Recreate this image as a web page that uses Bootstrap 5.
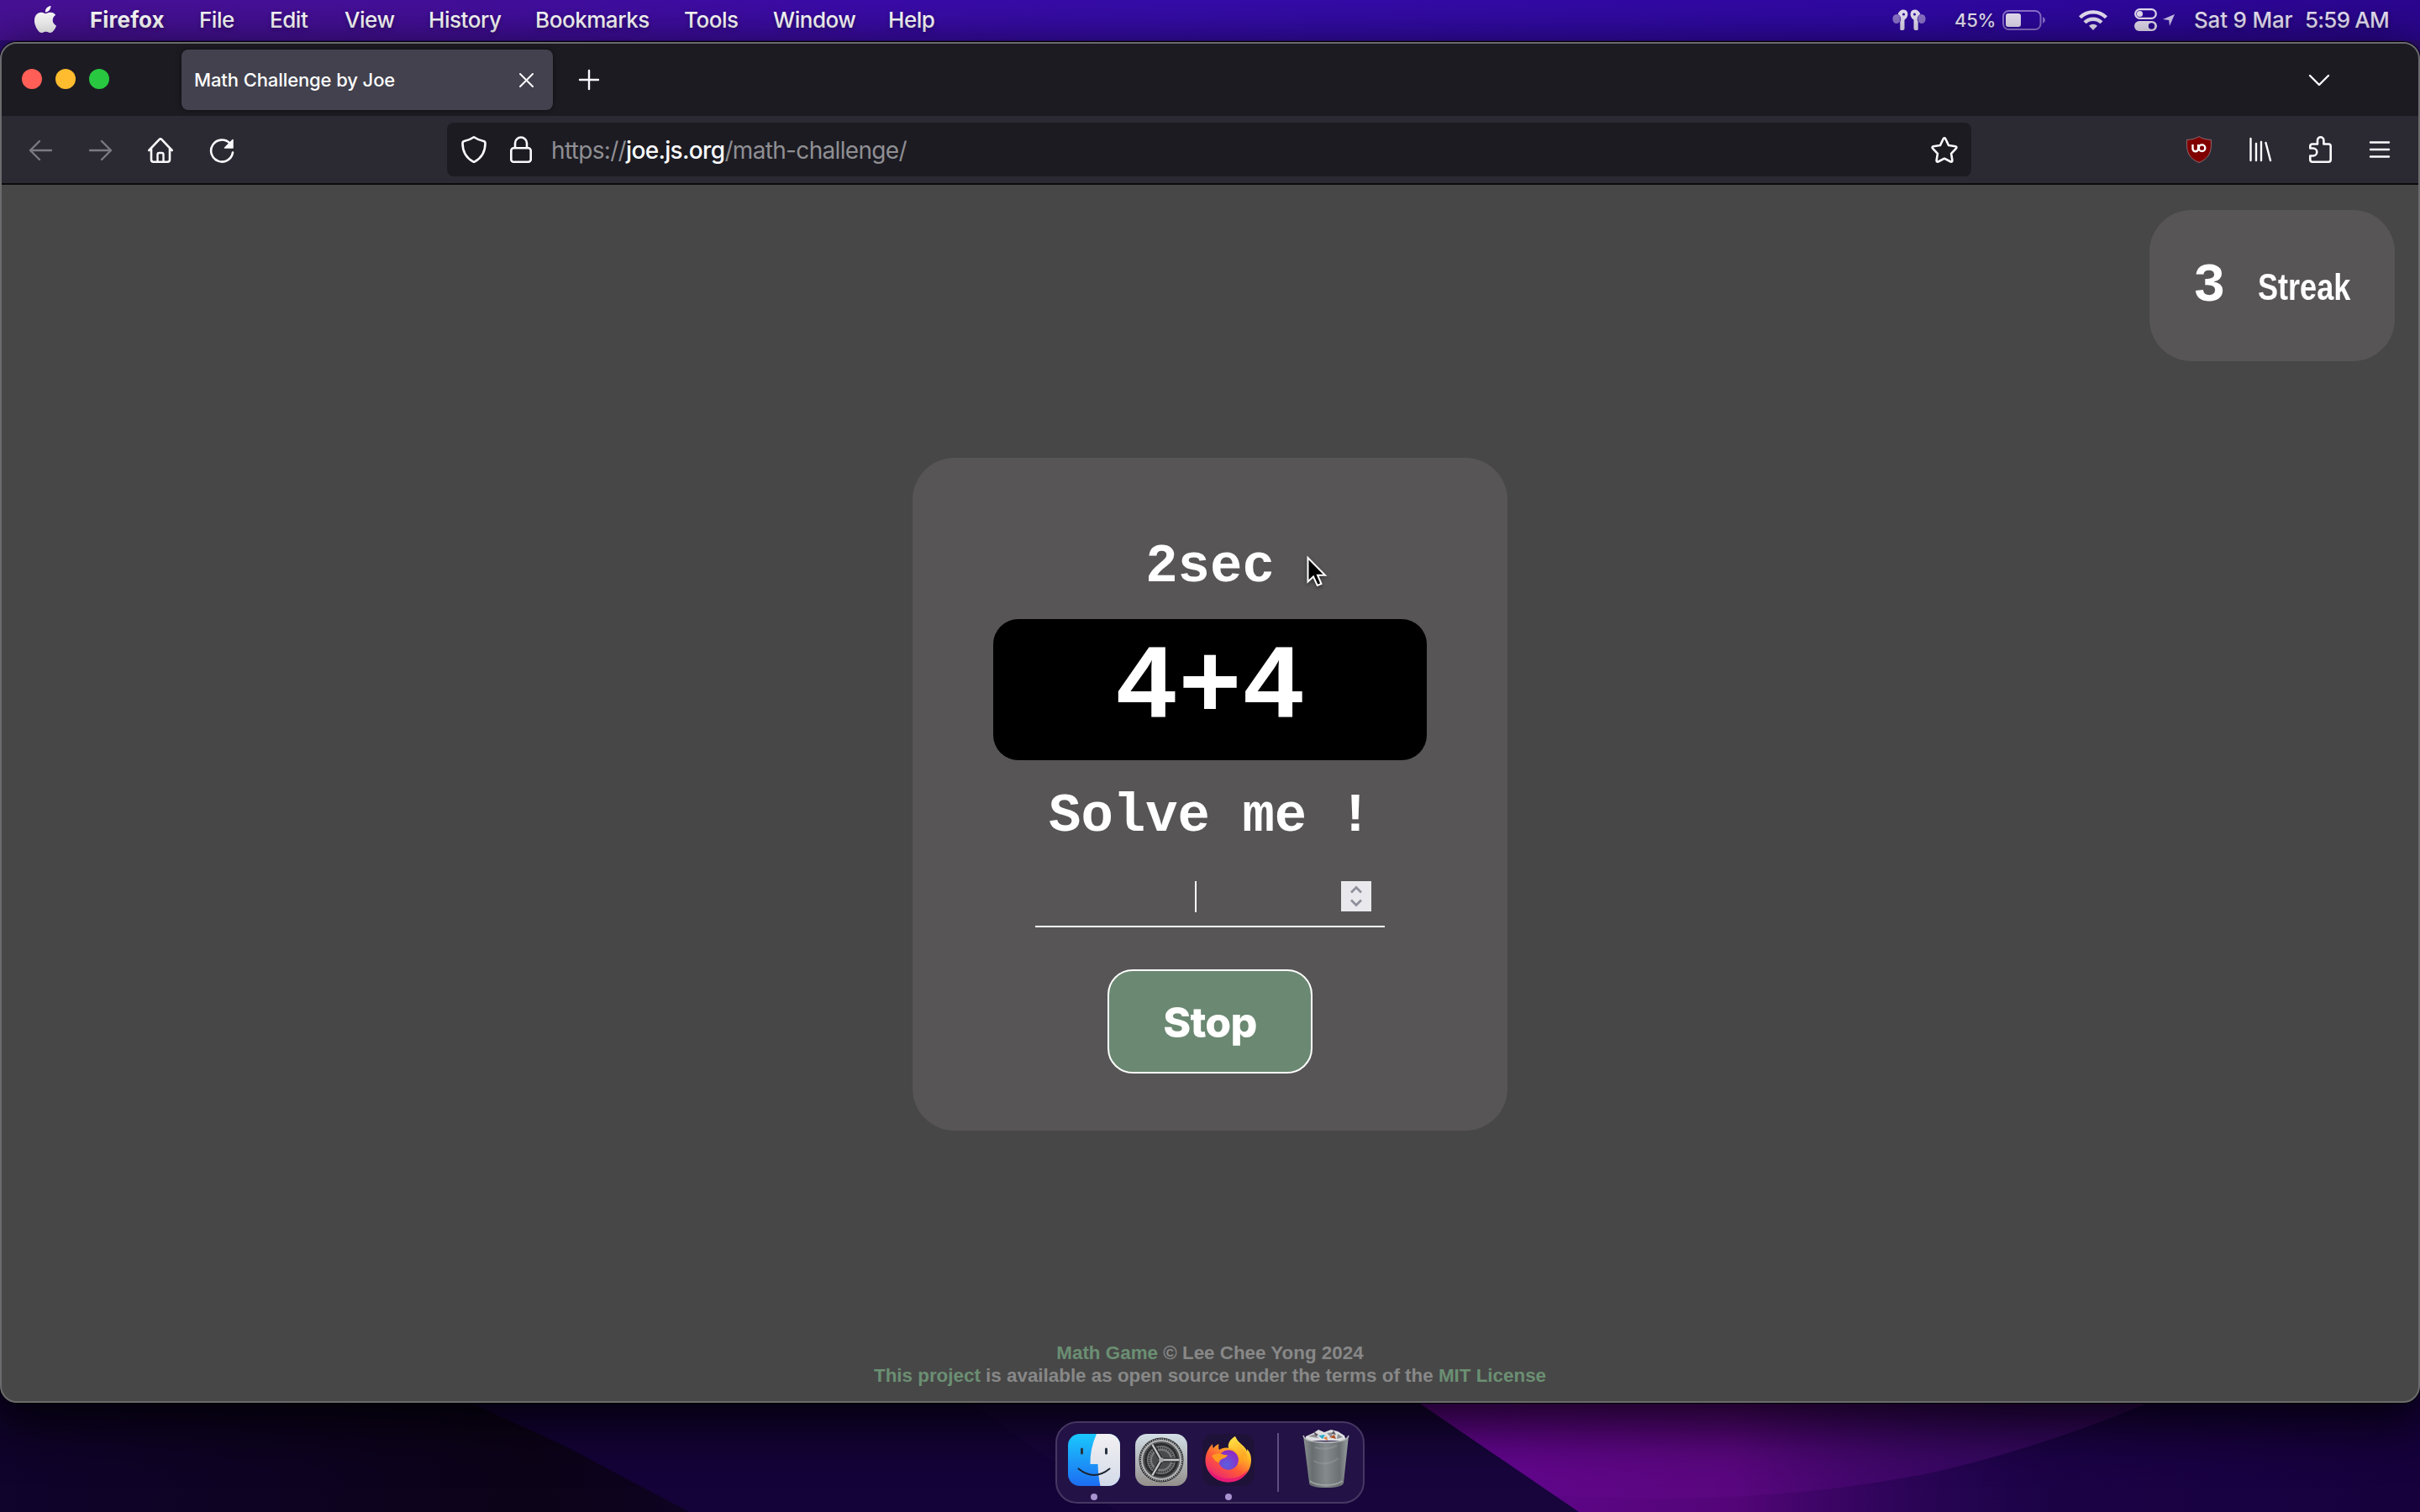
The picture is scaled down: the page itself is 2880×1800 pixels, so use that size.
<!DOCTYPE html>
<html lang="en">
<head>
<meta charset="utf-8">
<title>Math Challenge by Joe</title>
<link rel="stylesheet" href="https://cdn.jsdelivr.net/npm/bootstrap@5.3.0/dist/css/bootstrap.min.css">
<style>
  body { width: 2880px; height: 1800px; overflow: hidden; font-family: Inter, "Noto Sans", sans-serif; background: #0b0220; color: #fff; }
  .wallpaper { inset: 0; width: 2880px; height: 1800px; z-index: -1; }
  svg { display: block; flex: none; overflow: visible; }

  /* system menu bar */
  .menubar { height: 48px; margin-bottom: 2px; padding-bottom: 1px; font-size: 26px; line-height: 46px; white-space: nowrap;
    background: linear-gradient(90deg, #471195 0, #440f99 500px, #3b0ba8 1000px, #350ca9 1400px, #2f08a2 2300px, #2b068f 2880px); text-shadow: 0 2px 5px rgba(0,0,0,.35); }
  .apple-mark { margin-left: 38px; margin-top: -2px; }
  .menu-titles { display: grid; grid-template-columns: 130px 84px 89px 100px 127px 177px 106px 137px 80px; margin-left: 37px; letter-spacing: -.45px; font-weight: 500; }
  .menu-titles span:first-child { font-weight: 700; letter-spacing: .1px; }
  .tray { color: #e9e2f6; margin-right: 37px; }
  .tray-pct { font-size: 22px; width: 57px; margin-left: 34px; letter-spacing: -.3px; padding-top: 1px; font-weight: 500; }
  .wifi { margin-left: 39px; }
  .controls { margin-left: 32px; }
  .location { margin-left: 7px; }
  .tray-date { width: 132px; margin-left: 23px; font-weight: 500; letter-spacing: -.2px; }
  .tray-time { width: 100px; font-weight: 500; letter-spacing: -.8px; }

  /* browser window */
  .window { height: 1620px; border: 2px solid #6b6b6d; border-radius: 20px; overflow: hidden; background: #474747; }
  .window-shadow { border-radius: 20px; box-shadow: 0 0 0 1px #000, 0 18px 60px 10px rgba(0,0,0,.75); height: 1620px; }
  .tabstrip { height: 86px; background: #1c1b22; }
  .lights { margin-left: 24px; gap: 16px; margin-top: -2px; }
  .lights i { width: 24px; height: 24px; border-radius: 50%; }
  .light-close { background: #ff5f57; } .light-min { background: #febc2e; } .light-max { background: #28c840; }
  .tab-active { width: 442px; height: 72px; margin-left: 86px; margin-top: -1px; border-radius: 8px; background: #42414d; box-shadow: 0 0 6px rgba(0,0,0,.5); font-size: 22px; padding: 1px 23px 0 15px; font-weight: 500; letter-spacing: -.1px; }
  .tab-new { margin-left: 31px; }
  .tab-list { margin-right: 106px; }
  .toolbar { height: 82px; background: #2b2a33; border-bottom: 2px solid #0c0c0d; }
  .nav-icons { margin: 2px 0 0 32px; gap: 43px; }
  .urlbar { width: 1814px; height: 64px; border-radius: 8px; background: #1c1b22; margin-left: 253px; font-size: 28px; color: #8f8f93; padding: 0 16px 0 17px; }
  .lock { margin-left: 28px; }
  .url { margin-left: 23px; letter-spacing: -.67px; padding-top: 1px; }
  .url b { color: #fbfbfe; font-weight: 500; }
  .tool-icons { margin-right: 34px; gap: 45px; }

  /* game page */
  .page { height: 1448px; }
  .streak { width: 292px; height: 180px; margin: 30px 28px 0 0; border-radius: 50px; background: #575556; padding: 56px 0 0 52px; }
  .streak-n { font: 700 64px/70px "Liberation Mono", monospace; width: 38px; }
  .streak-t { font: 700 44px/72px "Liberation Sans", sans-serif; transform: scaleX(.82); transform-origin: 0 50%; margin-left: 39px; }
  .game { width: 708px; height: 801px; margin-top: 115px; border-radius: 50px; background: #575556; font-family: "Liberation Mono", monospace; font-weight: 700; padding-top: 94px; }
  .game-line { font-size: 64px; line-height: 72px; white-space: pre; }
  .question { width: 516px; height: 168px; margin-top: 26px; border-radius: 30px; background: #000; font-size: 126px; line-height: 168px; }
  .ask { margin-top: 31px; }
  .answer { width: 416px; height: 74px; margin-top: 22px; border-bottom: 2px solid #fff; padding: 19px 16px 0 190px; }
  .caret { width: 2px; height: 37px; background: #fff; }
  .stop { width: 244px; height: 124px; margin-top: 50px; border: 2px solid #fff; border-radius: 30px; background: #6b8872; color: #fff; font: 800 50px/1 Inter, sans-serif; letter-spacing: -.8px; padding: 2px 0 0; }
  .credits { color: #888; font: 700 22.4px/27px "Liberation Sans", sans-serif; margin-bottom: 17px; }
  .credits a { color: #6b8f73; text-decoration: none; }
  .pointer { left: 1555px; top: 662px; }

  /* dock */
  .dock { width: 368px; height: 98px; margin-top: 22px; border: 2px solid #453762; border-radius: 26px; background: #231246; padding: 13px 0 0 13px; }
  .dock-app { width: 80px; }
  .dock-dot { width: 8px; height: 8px; border-radius: 50%; background: #a892cf; margin: 9px 0 0 27px; }
  .dock-sep { width: 2px; height: 70px; background: #5f4d84; margin: -1px 0 0 9px; }
  .trash { margin: -6px 0 0 29px; }
</style>
<script src="https://cdn.jsdelivr.net/npm/bootstrap@5.3.0/dist/js/bootstrap.bundle.min.js"></script>
</head>
<body class="position-relative d-flex flex-column">
<svg class="wallpaper position-absolute" viewBox="0 0 2880 1800">
  <defs>
    <linearGradient id="wp" x1="0" x2="1" y1="0" y2="0"><stop offset="0" stop-color="#10032c"/><stop offset=".22" stop-color="#0c0318"/><stop offset=".5" stop-color="#150340"/><stop offset=".7" stop-color="#210450"/><stop offset="1" stop-color="#16013c"/></linearGradient>
    <linearGradient id="pu" x1="1690" x2="2440" y1="0" y2="0" gradientUnits="userSpaceOnUse"><stop offset="0" stop-color="#620590"/><stop offset=".5" stop-color="#540578"/><stop offset="1" stop-color="#2b0659" stop-opacity="0"/></linearGradient>
    <linearGradient id="ar" x1="1690" x2="2570" y1="0" y2="0" gradientUnits="userSpaceOnUse"><stop offset="0" stop-color="#7a0aa0" stop-opacity=".1"/><stop offset="1" stop-color="#5a1080" stop-opacity=".4"/></linearGradient>
  </defs>
  <rect width="2880" height="1800" fill="url(#wp)"/>
  <rect width="2880" height="80" fill="#2f0c78"/>
  <path d="M540 1660C600 1690 640 1705 683 1727L820 1800H1900V1660Z" fill="#140338"/>
  <path d="M1140 1660L1260 1745 1330 1800H1900V1660Z" fill="#17053c"/>
  <path d="M1674 1660L1879 1800H2500V1660Z" fill="url(#pu)"/>
  <path d="M1674 1660L1850 1780Q2080 1795 2290 1755Q2430 1725 2580 1660Z" fill="url(#ar)"/>
</svg>

<nav class="menubar d-flex align-items-center">
  <svg class="apple-mark" width="32" height="32" viewBox="0 0 16 16" fill="#fff"><path d="M11.182.008C11.148-.03 9.923.023 8.857 1.18c-1.066 1.156-.902 2.482-.878 2.516s1.52.087 2.475-1.258.762-2.391.728-2.43m3.314 11.733c-.048-.096-2.325-1.234-2.113-3.422s1.675-2.789 1.698-2.854-.597-.79-1.254-1.157a3.7 3.7 0 0 0-1.563-.434c-.108-.003-.483-.095-1.254.116-.508.139-1.653.589-1.968.607-.316.018-1.256-.522-2.267-.665-.647-.125-1.333.131-1.824.328-.49.196-1.422.754-2.074 2.237-.652 1.482-.311 3.83-.067 4.56s.625 1.924 1.273 2.796c.576.984 1.34 1.667 1.659 1.899s1.219.386 1.843.067c.502-.308 1.408-.485 1.766-.472.357.013 1.061.154 1.782.539.571.197 1.111.115 1.652-.105.541-.221 1.324-1.059 2.238-2.758q.52-1.185.473-1.282"/></svg>
  <div class="menu-titles"><span>Firefox</span><span>File</span><span>Edit</span><span>View</span><span>History</span><span>Bookmarks</span><span>Tools</span><span>Window</span><span>Help</span></div>
  <div class="tray d-flex align-items-center ms-auto">
    <!-- earbuds -->
    <svg width="40" height="26" viewBox="0 0 40 26" fill="#e9e2f6"><g id="bud"><ellipse cx="5" cy="11.500" rx="4.600" ry="5.500" opacity=".5"/><path d="M6.500 6C8 1 13-1 16.500 1.500c3 2.500 2.500 8.500-2 11V23a2 2 0 0 1-2 2h-2.200a1 1 0 0 1-1-1V15c2-3 .5-8-2.800-9z"/><circle cx="13.500" cy="6" r="1.500" fill="#2f08a2"/></g><use href="#bud" transform="matrix(-1 0 0 1 40 0)"/></svg>
    <span class="tray-pct">45%</span>
    <svg width="52" height="24" viewBox="0 0 52 24"><rect x="1" y="1" width="44.500" height="22" rx="6.500" fill="none" stroke="#8b70cf" stroke-width="2"/><rect x="4" y="4" width="18" height="16" rx="3" fill="#e9e2f6"/><path d="M48 8q3 1.500 3 4t-3 4z" fill="#8b70cf"/></svg>
    <svg class="wifi" width="34" height="26" viewBox="0 0 34 26" fill="none" stroke="#e9e2f6" stroke-width="4.400"><path d="M1.500 9.800a22 22 0 0 1 31 0M7 15.800a14.300 14.300 0 0 1 20 0"/><path d="M17 25l-5-5.200a7.200 7.200 0 0 1 10 0z" fill="#e9e2f6" stroke="none"/></svg>
    <svg class="controls" width="27" height="27" viewBox="0 0 27 27"><rect x="1.200" y="1.200" width="24.600" height="10.600" rx="5.300" fill="none" stroke="#e9e2f6" stroke-width="2.200"/><circle cx="6.500" cy="6.500" r="3.600" fill="#e9e2f6"/><rect y="15" width="27" height="12" rx="6" fill="#e9e2f6"/><circle cx="20.500" cy="21" r="3.700" fill="#2d0796"/></svg>
    <svg class="location" width="14" height="14" viewBox="0 0 14 14" fill="#d2c8ee"><path d="M14 0L8 14 7.200 7 0 6z"/></svg>
    <span class="tray-date">Sat 9 Mar</span><span class="tray-time">5:59 AM</span>
  </div>
</nav>

<div class="window-shadow"><main class="window">
  <div class="tabstrip d-flex align-items-center">
    <div class="lights d-flex"><i class="light-close"></i><i class="light-min"></i><i class="light-max"></i></div>
    <div class="tab-active d-flex align-items-center justify-content-between"><span>Math Challenge by Joe</span>
      <svg width="17" height="17" viewBox="0 0 17 17" stroke="#fbfbfe" stroke-width="2" stroke-linecap="round"><path d="M1 1l15 15M16 1L1 16"/></svg></div>
    <svg class="tab-new" width="24" height="24" viewBox="0 0 24 24" stroke="#fbfbfe" stroke-width="2.400" stroke-linecap="round"><path d="M12 1v22M1 12h22"/></svg>
    <svg class="tab-list ms-auto" width="24" height="13" viewBox="0 0 24 13" fill="none" stroke="#fbfbfe" stroke-width="2.400" stroke-linecap="round" stroke-linejoin="round"><path d="M1 1l11 11L23 1"/></svg>
  </div>

  <div class="toolbar d-flex align-items-center">
    <div class="nav-icons d-flex align-items-center">
      <svg width="28" height="26" viewBox="0 0 28 26" fill="none" stroke="#7b7a82" stroke-width="2.400" stroke-linecap="round" stroke-linejoin="round"><path d="M27 13H2M13 2L2 13l11 11"/></svg>
      <svg width="28" height="26" viewBox="0 0 28 26" fill="none" stroke="#7b7a82" stroke-width="2.400" stroke-linecap="round" stroke-linejoin="round"><path d="M2 13h25M16 2l11 11-11 11"/></svg>
      <svg width="30" height="30" viewBox="0 0 30 30" fill="none" stroke="#fbfbfe" stroke-width="2.600" stroke-linecap="round" stroke-linejoin="round"><path d="M1.300 15L13.500 2.200q1.500-1.500 3 0L28.700 15M4 13v13q0 2.700 2.700 2.700h16.600q2.700 0 2.700-2.700V13"/><path d="M11.500 28.500V20q0-2 2-2h3q2 0 2 2v8.500" stroke-width="2.400"/></svg>
      <svg width="30" height="30" viewBox="0 0 30 30" fill="none" stroke="#fbfbfe" stroke-width="2.600" stroke-linecap="round"><path d="M28 17.500A13 13 0 1 1 24.500 6.500"/><path d="M28 2.500v9.500h-9.500z" fill="#fbfbfe" stroke-width="1.500" stroke-linejoin="round"/></svg>
    </div>
    <div class="urlbar d-flex align-items-center">
      <svg width="30" height="32" viewBox="0 0 30 32" fill="none" stroke="#fbfbfe" stroke-width="2.600" stroke-linejoin="round"><path d="M14 1.700q1-.7 2 0Q20 4.600 26.500 6q2 .5 2 2.500C28.500 20 24 26 16 30.400q-1 .6-2 0C6 26 1.500 20 1.500 8.500q0-2 2-2.500Q10 4.600 14 1.700z"/></svg>
      <svg class="lock" width="26" height="32" viewBox="0 0 26 32" fill="none" stroke="#fbfbfe" stroke-width="2.600"><rect x="1.300" y="14.300" width="23.400" height="16.400" rx="3"/><path d="M6 14V8.500a7 7 0 0 1 14 0V14"/></svg>
      <span class="url">https://<b>joe.js.org</b>/math-challenge/</span>
      <svg class="ms-auto" width="32" height="31" viewBox="0 0 32 31" fill="none" stroke="#fbfbfe" stroke-width="2.600" stroke-linejoin="round"><path d="M14.700 2.200q1.300-1.600 2.600 0l3.700 7.800 8.200 1.300q2 .6.800 2.300l-5.900 6.200 1.300 8.200q0 2-2 1.500L16 25.700l-7.400 3.800q-2 .5-2-1.500l1.300-8.200L2 13.600q-1.200-1.700.8-2.300L11 10z"/></svg>
    </div>
    <div class="tool-icons ms-auto d-flex align-items-center">
      <svg width="30" height="32" viewBox="0 0 30 32"><path d="M15 .5Q20 4 29.500 4.500C30 18 28 26 15 31.500 2 26 0 18 .5 4.500 10 4 15 .5 15 .5z" fill="#800000" stroke="#8d6a72"/><path d="M7.500 10v5a3.300 3.300 0 0 0 6.600 0v-5" fill="none" stroke="#fff" stroke-width="2.400"/><circle cx="18.500" cy="14.200" r="3.800" fill="none" stroke="#fff" stroke-width="2.400"/></svg>
      <svg width="26" height="28" viewBox="0 0 26 28" stroke="#fbfbfe" stroke-width="2.400" stroke-linecap="round"><path d="M1.500 1v26M8 7v20M14 5v22M19.500 6L25 27"/></svg>
      <svg width="27" height="32" viewBox="0 0 27 32" fill="none" stroke="#fbfbfe" stroke-width="2.600" stroke-linejoin="round"><path d="M10 9.500V5a3.700 3.700 0 0 1 7.400 0v4.500h5.800q2.500 0 2.500 2.500v16q0 2.700-2.500 2.700H4q-2.700 0-2.700-2.700v-4.500h3.500a4.500 4.500 0 0 0 0-9H1.300V12q0-2.500 2.700-2.500z"/></svg>
      <svg width="24" height="20" viewBox="0 0 24 20" stroke="#fbfbfe" stroke-width="2.400" stroke-linecap="round"><path d="M1 1.500h22M1 10h22M1 18.500h22"/></svg>
    </div>
  </div>

  <section class="page d-flex flex-column align-items-center">
    <div class="streak d-flex align-self-end"><span class="streak-n">3</span><span class="streak-t">Streak</span></div>
    <div class="game d-flex flex-column align-items-center">
      <div class="game-line">2sec</div>
      <div class="question text-center">4+4</div>
      <div class="game-line ask">Solve me !</div>
      <div class="answer d-flex justify-content-between"><span class="caret"></span>
        <svg width="36" height="36" viewBox="0 0 36 36" fill="none" stroke="#8f8f9d" stroke-width="2.800"><rect width="36" height="36" fill="#e9e9ed" stroke="none"/><path d="M12 13.500l6-6 6 6M12 22.500l6 6 6-6"/></svg></div>
      <button class="stop">Stop</button>
    </div>
    <footer class="credits text-center mt-auto"><a href="#">Math Game</a> © Lee Chee Yong 2024<br><a href="#">This project</a> is available as open source under the terms of the <a href="#">MIT License</a></footer>
  </section>
</main></div>

<div class="dock d-flex align-self-center">
  <div class="dock-app">
    <svg width="62" height="62" viewBox="0 0 62 62"><defs><linearGradient id="fb" x2="0" y2="1"><stop stop-color="#1ac8fd"/><stop offset="1" stop-color="#1d6df2"/></linearGradient><linearGradient id="fw" x2="0" y2="1"><stop stop-color="#f2f0f2"/><stop offset="1" stop-color="#d3dbe9"/></linearGradient></defs><rect width="62" height="62" rx="14" fill="url(#fb)"/><path d="M34 0h14a14 14 0 0 1 14 14v34a14 14 0 0 1-14 14h-9.500Q36 51 35.500 36H26.500Q26 18 34 0z" fill="url(#fw)"/><path d="M16.500 18v5M45.500 18v5" stroke="#26323f" stroke-width="3" stroke-linecap="round"/><path d="M12.500 41.500q18.500 15 37 0" fill="none" stroke="#1b2430" stroke-width="2" stroke-linecap="round"/></svg>
    <div class="dock-dot"></div>
  </div>
  <div class="dock-app">
    <svg width="62" height="62" viewBox="0 0 62 62"><defs><linearGradient id="sg" x2="0" y2="1"><stop stop-color="#d3dfe6"/><stop offset="1" stop-color="#938f8c"/></linearGradient></defs><rect width="62" height="62" rx="14" fill="url(#sg)"/><circle cx="31" cy="31" r="26.500" fill="#28292a"/><circle cx="31" cy="31" r="23" fill="#555" stroke="#b5b7b8" stroke-width="2"/><circle cx="31" cy="31" r="24.600" fill="none" stroke="#a5a7a8" stroke-width="2.400" stroke-dasharray="1.300 1.300"/><circle cx="31" cy="31" r="18.500" fill="#77797a" stroke="#2c2d2e" stroke-width="3"/><circle cx="31" cy="31" r="14.500" fill="none" stroke="#333" stroke-width="2.500" stroke-dasharray="1.400 1.200"/><circle cx="31" cy="31" r="11" fill="#4a4b4c"/><path d="M31 31h21M31 31L20.500 12.800M31 31L20.500 49.200" stroke="#2a2b2c" stroke-width="5"/><path d="M31 31h21.500M31 31L20.300 12.500M31 31L20.300 49.500" stroke="#c3c5c6" stroke-width="2.400"/><circle cx="31" cy="31" r="2.800" fill="#a5a7a8"/></svg>
  </div>
  <div class="dock-app">
    <svg width="62" height="62" viewBox="0 0 62 62"><defs><linearGradient id="fx" x1=".85" y1=".05" x2=".25" y2="1"><stop stop-color="#fff44f"/><stop offset=".3" stop-color="#ffb325"/><stop offset=".6" stop-color="#ff5a36"/><stop offset="1" stop-color="#e81e7c"/></linearGradient><radialGradient id="fg" cx=".4" cy=".75" r=".7"><stop stop-color="#5b5fe0"/><stop offset="1" stop-color="#8f2ac4"/></radialGradient><linearGradient id="fl" x2=".3" y2="1"><stop stop-color="#ffe94a"/><stop offset="1" stop-color="#ff9a1c"/></linearGradient></defs>
      <rect width="62" height="62" rx="14" fill="#1f1238"/>
      <path d="M39 3C33 7 31 12 31 17c-4-1-8 0-11 2-1-2-1-4-.5-7-3 1-5 3-6.500 5-.8-1-1-3-1-5-5 5-8.500 12-8.500 19.500C3.500 46 16 57.500 30.500 57.500S58 46.500 58 31c0-6-2-10-5-13 0 1 .3 2 0 3-2-7-10-9-14-18z" fill="url(#fx)"/>
      <path d="M7 41q8 12 24 12 15 0 23-10-6 14.500-23.500 14.500Q13 56 7 41z" fill="#e6107c" opacity=".7"/>
      <circle cx="31" cy="31" r="11.800" fill="url(#fg)"/>
      <path d="M39 3C32 7 30 12 31 17c8 0 13 6 13 13 0 3-1 5-2 7 6-2 8-8 7-13 2 2 3 5 3 8 3-9-3-15-7-19s-6-6-6-10z" fill="url(#fl)"/>
      <path d="M11 26q6-4 12-2 3 1.500 7 1-1 3-6 4.500-4 1.500-4 5-5-1-9-8.500z" fill="#ff9a1f"/></svg>
    <div class="dock-dot"></div>
  </div>
  <div class="dock-sep"></div>
  <svg class="trash" width="54" height="72" viewBox="0 0 54 72"><defs><linearGradient id="tr"><stop stop-color="#8b9192"/><stop offset=".2" stop-color="#686e70"/><stop offset=".5" stop-color="#858b8c"/><stop offset=".8" stop-color="#6b7172"/><stop offset="1" stop-color="#9aa0a1"/></linearGradient></defs>
    <path d="M3 9L12 5 18 1l7 3 8-3 8 2 8 5 2 6H3z" fill="#dfe0e2"/>
    <path d="M6 9l8-3 4 5zM28 5l8-1-3 6zM41 6l6 4-7 2z" fill="#8e9093"/><path d="M18 8l8-1-3 5z" fill="#2aa9c9"/><path d="M31 10l6-3 2 5z" fill="#b0542c"/><path d="M24 11l4-2 1 5z" fill="#e07b39"/><path d="M12 3l6 4-3 2zM36 2l3 5-5-1z" fill="#5c5660"/>
    <path d="M0 8q2 8 27 8t27-8L48 64q-1 6-21 6T7 64z" fill="url(#tr)"/>
    <path d="M0 8q2 8 27 8t27-8" fill="none" stroke="#b9bdbe" stroke-width="1.500"/><path d="M8 62q6 5 19 5t19-5" fill="none" stroke="#a5aaab" stroke-width="1.500"/><path d="M14 22q12 4 26-2M12 38q14 8 30-3" fill="none" stroke="#9fa4a5" stroke-width="2" opacity=".4"/></svg>
</div>

<!-- mouse pointer -->
<svg class="pointer position-absolute" width="24" height="36" viewBox="0 0 24 36"><path d="M1.500 2v28.500l6.500-6 4.800 10.500 4.700-2-4.500-10.300h9z" fill="#000" stroke="#fff" stroke-width="2" filter="drop-shadow(0 2px 2px rgba(0,0,0,.4))"/></svg>
</body>
</html>
